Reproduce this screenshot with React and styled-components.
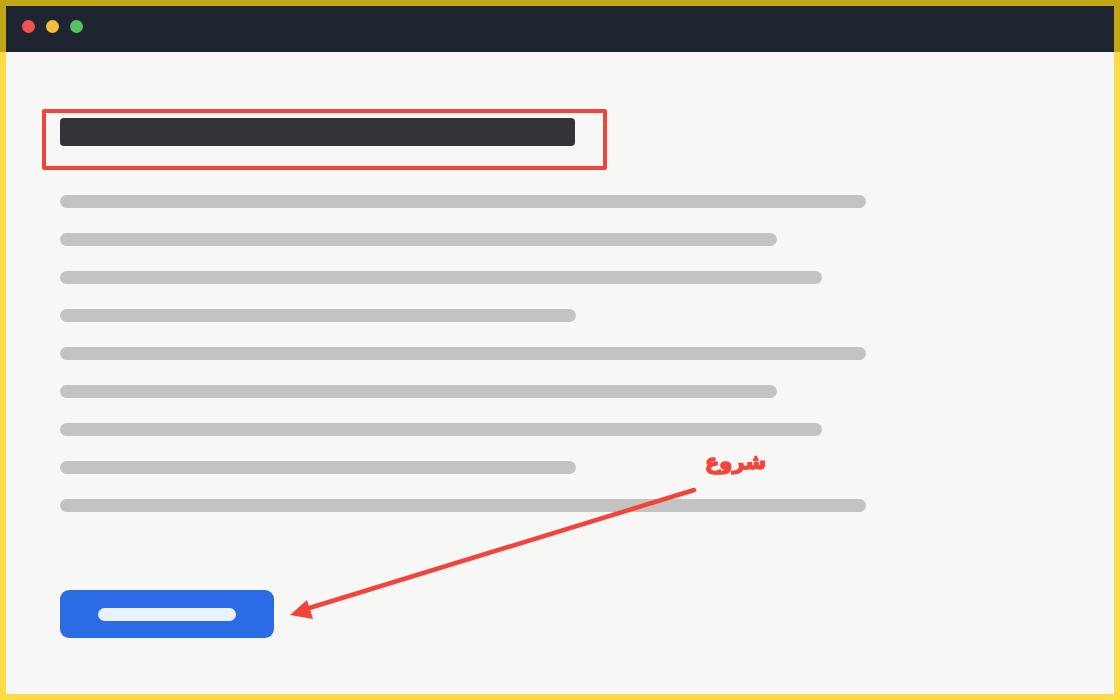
import styled, { createGlobalStyle } from "styled-components";

const GlobalStyle = createGlobalStyle`
  html, body {
    margin: 0;
    padding: 0;
    background: #f7f7f5;
  }
  body {
    font-family: "DejaVu Sans", "Liberation Sans", sans-serif;
  }
`;

const Frame = styled.div`
  width: 1120px;
  height: 700px;
  box-sizing: border-box;
  padding: 6px;
  background: linear-gradient(to bottom, #c1a515 52px, #fcdc46 52px);
`;

const Window = styled.div`
  position: relative;
  height: 100%;
  display: flex;
  flex-direction: column;
  background: #f7f7f5;
`;

const TitleBar = styled.div`
  height: 46px;
  box-sizing: border-box;
  flex: none;
  display: flex;
  align-items: flex-start;
  gap: 11px;
  padding: 14px 0 0 16px;
  background: #1f2530;
`;

const Dot = styled.span`
  width: 13px;
  height: 13px;
  border-radius: 50%;
  background: ${(p) => p.color};
`;

const Content = styled.div`
  flex: 1;
  display: flex;
  flex-direction: column;
  align-items: flex-start;
  padding: 66px 54px 0;
`;

const TitleWrap = styled.div`
  position: relative;
  margin-bottom: 49px;
`;

const Heading = styled.div`
  width: 515px;
  height: 28px;
  border-radius: 4px;
  background: #333338;
`;

const Highlight = styled.div`
  position: absolute;
  top: -9px;
  left: -18px;
  width: 565px;
  height: 61px;
  box-sizing: border-box;
  border: 4px solid #f2443a;
  border-radius: 2px;
`;

const Lines = styled.div`
  display: flex;
  flex-direction: column;
  gap: 25px;
`;

const Line = styled.div`
  width: ${(p) => p.w}px;
  height: 13px;
  border-radius: 7px;
  background: #c3c3c1;
`;

const Button = styled.div`
  margin-top: 78px;
  width: 214px;
  height: 48px;
  border-radius: 9px;
  background: #2b6be6;
  display: flex;
  align-items: center;
  justify-content: center;
`;

const ButtonLabel = styled.div`
  width: 138px;
  height: 13px;
  border-radius: 7px;
  background: #eaf1fd;
`;

const Overlay = styled.svg`
  position: absolute;
  left: 0;
  top: 0;
  pointer-events: none;
`;

const Note = styled.span`
  position: absolute;
  left: 699px;
  top: 444px;
  font-family: "DejaVu Sans", sans-serif;
  font-weight: bold;
  font-size: 21px;
  color: #f2443a;
  -webkit-text-stroke: 1.3px #f2443a;
  direction: rtl;
`;

const widths = [806, 717, 762, 516, 806, 717, 762, 516, 806];

export default function App() {
  return (
    <>
      <GlobalStyle />
      <Frame>
        <Window>
          <TitleBar>
            <Dot color="#ee5252" />
            <Dot color="#f6bd3a" />
            <Dot color="#55c35f" />
          </TitleBar>
          <Content>
            <TitleWrap>
              <Heading />
              <Highlight />
            </TitleWrap>
            <Lines>
              {widths.map((w, i) => (
                <Line key={i} w={w} />
              ))}
            </Lines>
            <Button>
              <ButtonLabel />
            </Button>
          </Content>
          <Overlay width="1108" height="688" viewBox="6 6 1108 688">
            <line
              x1="694"
              y1="490"
              x2="306"
              y2="609"
              stroke="#f2443a"
              strokeWidth="4.5"
              strokeLinecap="round"
            />
            <polygon points="290,615 307,600 313,619" fill="#f2443a" />
          </Overlay>
          <Note>شروع</Note>
        </Window>
      </Frame>
    </>
  );
}
